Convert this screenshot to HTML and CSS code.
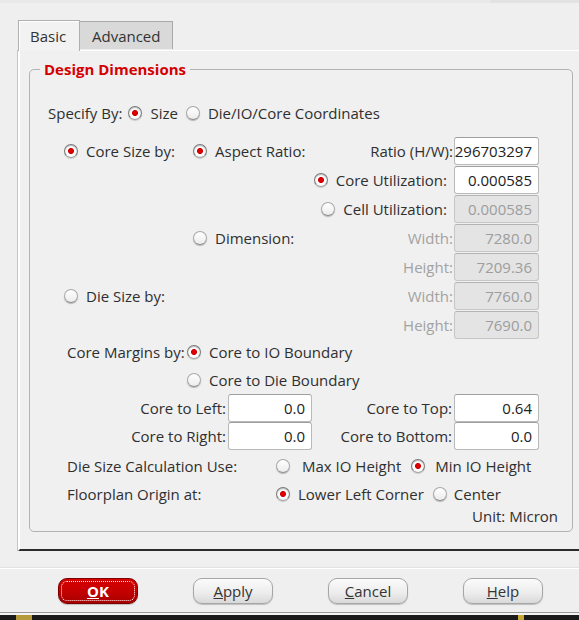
FILE: index.html
```html
<!DOCTYPE html>
<html>
<head>
<meta charset="utf-8">
<link rel="stylesheet" href="styles.css">
</head>
<body>
<div class="window">
  <div class="topstrip"><span class="topstrip-dark"></span></div>
  <div class="tabs">
    <div class="tab active">Basic</div>
    <div class="tab">Advanced</div>
  </div>
  <div class="pane">
    <fieldset class="group">
      <legend>Design Dimensions</legend>

      <div class="row specify">
        <span class="label">Specify By:</span>
        <span class="radio checked gap-size"><i></i>Size</span>
        <span class="radio gap-die"><i></i>Die/IO/Core Coordinates</span>
      </div>

      <div class="sizes">
        <div class="c1"><span class="radio checked"><i></i>Core Size by:</span></div>
        <div class="c2 split"><span class="radio checked"><i></i>Aspect Ratio:</span><span class="label">Ratio (H/W):</span></div>
        <div class="field">296703297</div>

        <div class="c1"></div>
        <div class="c2 end"><span class="radio checked util"><i></i>Core Utilization:</span></div>
        <div class="field">0.000585</div>

        <div class="c1"></div>
        <div class="c2 end"><span class="radio util"><i></i>Cell Utilization:</span></div>
        <div class="field disabled">0.000585</div>

        <div class="c1"></div>
        <div class="c2 split"><span class="radio"><i></i>Dimension:</span><span class="label dim">Width:</span></div>
        <div class="field disabled">7280.0</div>

        <div class="c1"></div>
        <div class="c2 end"><span class="label dim">Height:</span></div>
        <div class="field disabled">7209.36</div>

        <div class="c1"><span class="radio"><i></i>Die Size by:</span></div>
        <div class="c2 end"><span class="label dim">Width:</span></div>
        <div class="field disabled">7760.0</div>

        <div class="c1"></div>
        <div class="c2 end"><span class="label dim">Height:</span></div>
        <div class="field disabled">7690.0</div>
      </div>

      <div class="margins">
        <div class="mrow">
          <span class="mlabel">Core Margins by:</span>
          <span class="radio checked"><i></i>Core to IO Boundary</span>
        </div>
        <div class="mrow">
          <span class="mlabel"></span>
          <span class="radio"><i></i>Core to Die Boundary</span>
        </div>
        <div class="mrow">
          <span class="flabel left">Core to Left:</span>
          <span class="field narrow">0.0</span>
          <span class="flabel right">Core to Top:</span>
          <span class="field">0.64</span>
        </div>
        <div class="mrow">
          <span class="flabel left">Core to Right:</span>
          <span class="field narrow">0.0</span>
          <span class="flabel right">Core to Bottom:</span>
          <span class="field">0.0</span>
        </div>
        <div class="mrow options">
          <span class="wlabel">Die Size Calculation Use:</span>
          <span class="radio wide"><i></i>Max IO Height</span>
          <span class="radio checked min"><i></i>Min IO Height</span>
        </div>
        <div class="mrow">
          <span class="wlabel">Floorplan Origin at:</span>
          <span class="radio checked"><i></i>Lower Left Corner</span>
          <span class="radio center"><i></i>Center</span>
        </div>
      </div>

      <div class="unit">Unit: Micron</div>
    </fieldset>
  </div>

  <div class="buttons">
    <button class="btn ok"><span class="focus"><u>O</u>K</span></button>
    <button class="btn"><u>A</u>pply</button>
    <button class="btn"><u>C</u>ancel</button>
    <button class="btn"><u>H</u>elp</button>
  </div>
  <div class="taskbar"><span class="tb-left"></span><span class="tb-right"></span></div>
</div>
</body>
</html>
```

FILE: styles.css
```css
* { box-sizing: border-box; }
html, body {
  margin: 0;
  padding: 0;
  background: #efefef;
  width: 579px;
  height: 620px;
  overflow: hidden;
}
body {
  font-family: "Open Sans", "Noto Sans", sans-serif;
  font-size: 15px;
  color: #2f2f2f;
}
.window {
  display: flex;
  flex-direction: column;
  height: 620px;
}
.topstrip {
  height: 3px;
  background: #e9e9e9;
  display: flex;
  justify-content: flex-end;
}
.topstrip-dark {
  width: 89px;
  background: #e2e2e2;
}
.tabs {
  display: flex;
  align-items: flex-end;
  margin-top: 17px;
  margin-left: 18px;
  height: 30px;
  position: relative;
  z-index: 1;
}
.tab {
  height: 28px;
  padding: 0 0 0 12px;
  display: flex;
  align-items: center;
  background: #d9d9d9;
  border: 1px solid #a9a9a9;
  border-bottom: none;
  color: #333;
  margin-bottom: 1px;
  white-space: nowrap;
}
.tab.active {
  height: 31px;
  width: 62px;
  background: #f2f2f2;
  border-color: #b0b0b0;
  box-shadow: inset 1px 1px 0 #fff;
  margin-bottom: -1px;
  padding: 0 0 0 11px;
}
.tab:not(.active) {
  width: 93px;
  border-left: none;
}
.pane {
  margin-left: 18px;
  margin-right: -10px;
  height: 501px;
  border-top: 1px solid #fff;
  border-left: 2px solid #fff;
  border-bottom: 2px solid #2b2b2b;
  box-shadow: -1px 0 0 #c4c4c4;
  padding: 8px 0 0 9px;
  background: #f0f0f0;
}
.group {
  margin: 0;
  padding: 0 0 5px 0;
  width: 544px;
  border: 1px solid #b2b2b2;
  border-radius: 5px;
  min-inline-size: 0;
}
.group legend {
  margin-left: 10px;
  padding: 0 4px;
  line-height: 20px;
  font-weight: bold;
  color: #d40000;
}
.radio {
  display: inline-flex;
  align-items: center;
  gap: 8px;
  white-space: nowrap;
}
.radio i {
  width: 14px;
  height: 14px;
  border-radius: 50%;
  border: 1px solid #a8a8a8;
  border-bottom-color: #8c8c8c;
  background: linear-gradient(#ffffff, #ececec);
  box-shadow: 0 1px 1px rgba(0,0,0,0.25);
  flex: none;
}
.radio.checked i {
  border-color: #7a7a7a;
  border-bottom-color: #a0a0a0;
  background: radial-gradient(circle at 50% 50%, #e60000 0, #d00000 2.6px, #ffffff 3.4px, #f2f2f2 100%);
  box-shadow: inset 0 1px 1px rgba(0,0,0,0.25), 0 1px 1px rgba(0,0,0,0.15);
}
.row {
  display: flex;
  align-items: center;
  height: 28px;
}
.specify {
  margin-top: 20px;
  margin-left: 18px;
}
.gap-size { margin-left: 6px; }
.gap-die { margin-left: 8px; }
.sizes {
  display: grid;
  grid-template-columns: 129px 261px 85px;
  grid-auto-rows: 29px;
  margin-top: 9px;
  margin-left: 34px;
}
.c1, .c2 {
  display: flex;
  align-items: center;
}
.c2.split { justify-content: space-between; padding-right: 1px; }
.c2.end { justify-content: flex-end; padding-right: 1px; }
.util { margin-right: 6px; }
.label { white-space: nowrap; }
.dim { color: #a2a2a2; }
.field {
  height: 28px;
  align-self: center;
  display: flex;
  align-items: center;
  justify-content: flex-end;
  padding-right: 6px;
  background: #ffffff;
  border: 1px solid #b9b9b9;
  border-top-color: #9f9f9f;
  border-radius: 3px;
  color: #222;
  white-space: nowrap;
  width: 85px;
}
.field.disabled {
  background: #e4e4e4;
  color: #9d9d9d;
  border-color: #c6c6c6;
  border-top-color: #b4b4b4;
}
.field.narrow { width: 84px; }
.margins {
  margin-left: 37px;
  margin-top: -1px;
}
.mrow {
  display: flex;
  align-items: center;
  height: 28px;
}
.mrow.options { margin-top: 2px; }
.mlabel { width: 120px; white-space: nowrap; }
.flabel { text-align: right; padding-right: 2px; white-space: nowrap; }
.flabel.left { width: 161px; }
.flabel.right { width: 142px; }
.wlabel { width: 209px; white-space: nowrap; }
.radio.wide { gap: 12px; }
.radio.min { margin-left: 10px; gap: 10px; }
.radio.center { margin-left: 9px; gap: 7px; }
.unit {
  text-align: right;
  padding-right: 14px;
  height: 20px;
  line-height: 20px;
  margin-top: -2px;
}
.buttons {
  margin-top: 17px;
  border-top: 1px solid #ffffff;
  box-shadow: 0 -1px 0 #e2e2e2;
  height: 44px;
  display: flex;
  align-items: center;
  gap: 55px;
  padding-left: 58px;
  padding-top: 0px;
}
.btn {
  width: 80px;
  height: 26px;
  border-radius: 9px;
  border: 1px solid #a6a6a6;
  background: linear-gradient(#fbfbfb, #ececec 60%, #d9d9d9);
  box-shadow: 0 1px 1px rgba(0,0,0,0.2);
  font-family: "Open Sans", "Noto Sans", sans-serif;
  font-size: 15px;
  color: #333;
  padding: 0;
}
.btn.ok {
  background: linear-gradient(#d90000, #c40000 50%, #a80000);
  border-color: #7a0000;
  color: #fff;
  font-weight: bold;
  padding: 2px;
}
.focus {
  display: flex;
  align-items: center;
  justify-content: center;
  width: 100%;
  height: 100%;
  border: 1px dotted #ffffff;
  border-radius: 6px;
}
.taskbar {
  margin-top: auto;
  height: 8px;
  border-top: 1px solid #9a9a9a;
  background: linear-gradient(#f4f4f4 0, #f4f4f4 2px, #1a1a1a 2px);
  display: flex;
  position: relative;
}
.tb-left {
  margin-left: 16px;
  margin-top: 2px;
  width: 16px;
  background: #b49a3a;
}
.tb-right {
  margin-left: auto;
  margin-right: 55px;
  margin-top: 2px;
  width: 6px;
  background: #c8a83a;
}
```
